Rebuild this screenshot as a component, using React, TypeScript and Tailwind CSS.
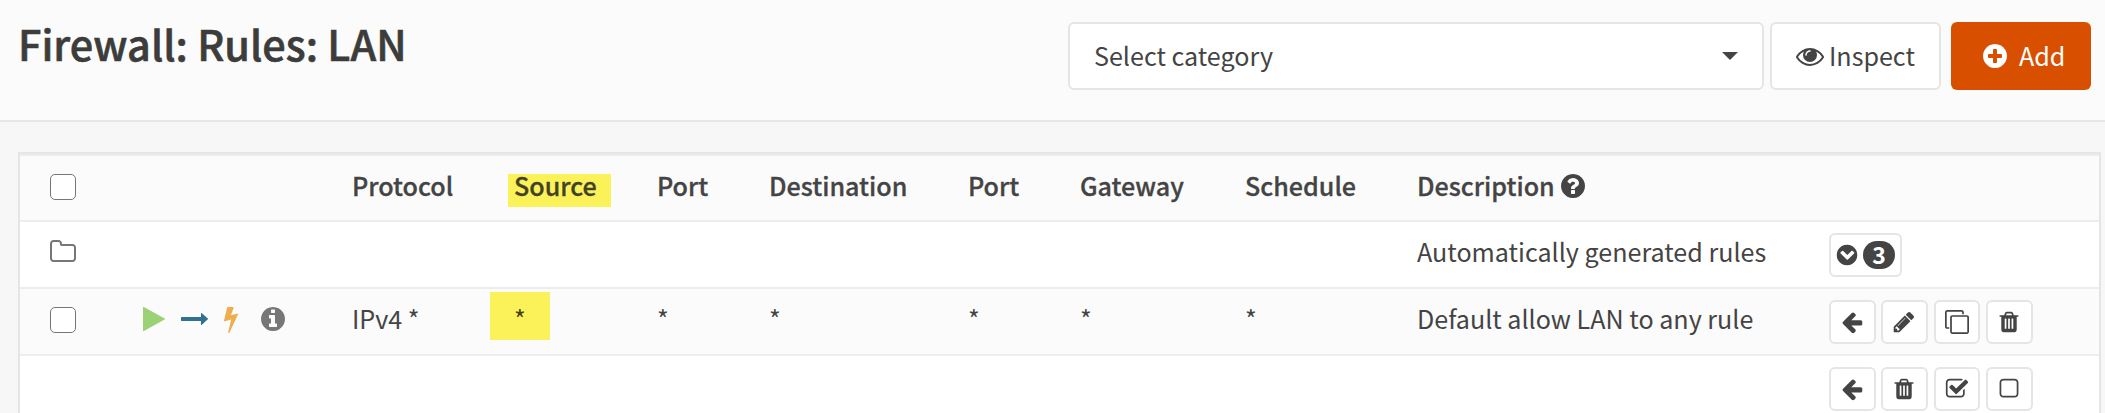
import React from "react";

const ring =
  "q0 209-103 385.5t-279.5 279.5-385.5 103-385.5-103-279.5-279.5-103-385.5 103-385.5 279.5-279.5 385.5-103 385.5 103 279.5 279.5 103 385.5z";

const paths = {
  arrowLeft:
    "M1664 896v128q0 53-32.5 90.5t-84.5 37.5h-704l293 294q38 36 38 90t-38 90l-75 76q-37 37-90 37-52 0-91-37l-651-652q-37-37-37-90 0-52 37-91l651-650q38-38 91-38 52 0 90 38l75 74q38 38 38 91t-38 91l-293 293h704q52 0 84.5 37.5t32.5 90.5z",
  pencil:
    "M491 1536l91-91-235-235-91 91v107h128v128h107zm523-928q0-22-22-22-10 0-17 7l-542 542q-7 7-7 17 0 22 22 22 10 0 17-7l542-542q7-7 7-17zm-54-192l416 416-832 832h-416v-416zm683 96q0 53-37 90l-166 166-416-416 166-165q36-38 90-38 53 0 91 38l235 234q37 39 37 91z",
  trash:
    "M704 1376v-704q0-14-9-23t-23-9h-64q-14 0-23 9t-9 23v704q0 14 9 23t23 9h64q14 0 23-9t9-23zm256 0v-704q0-14-9-23t-23-9h-64q-14 0-23 9t-9 23v704q0 14 9 23t23 9h64q14 0 23-9t9-23zm256 0v-704q0-14-9-23t-23-9h-64q-14 0-23 9t-9 23v704q0 14 9 23t23 9h64q14 0 23-9t9-23zm-544-992h448l-48-117q-7-9-17-11h-317q-10 2-17 11zm928 32v64q0 14-9 23t-23 9h-96v948q0 83-47 143.5t-113 60.5h-832q-66 0-113-58.5t-47-141.5v-952h-96q-14 0-23-9t-9-23v-64q0-14 9-23t23-9h309l70-167q15-37 54-63t79-26h320q40 0 79 26t54 63l70 167h309q14 0 23 9t9 23z",
  clone:
    "M1664 1632v-1088q0-13-9.5-22.5t-22.5-9.5h-1088q-13 0-22.5 9.5t-9.5 22.5v1088q0 13 9.5 22.5t22.5 9.5h1088q13 0 22.5-9.5t9.5-22.5zm128-1088v1088q0 66-47 113t-113 47h-1088q-66 0-113-47t-47-113v-1088q0-66 47-113t113-47h1088q66 0 113 47t47 113zm-384-384v160h-128v-160q0-13-9.5-22.5t-22.5-9.5h-1088q-13 0-22.5 9.5t-9.5 22.5v1088q0 13 9.5 22.5t22.5 9.5h160v128h-160q-66 0-113-47t-47-113v-1088q0-66 47-113t113-47h1088q66 0 113 47t47 113z",
  checkSquare:
    "M1472 930v318q0 119-84.5 203.5t-203.5 84.5h-832q-119 0-203.5-84.5t-84.5-203.5v-832q0-119 84.5-203.5t203.5-84.5h832q63 0 117 25 15 7 18 23 3 17-9 29l-49 49q-10 10-23 10-3 0-9-2-23-6-45-6h-832q-66 0-113 47t-47 113v832q0 66 47 113t113 47h832q66 0 113-47t47-113v-254q0-13 9-22l64-64q10-10 23-10 6 0 12 3 20 8 20 29zm231-489l-814 814q-24 24-57 24t-57-24l-430-430q-24-24-24-57t24-57l110-110q24-24 57-24t57 24l263 263 647-647q24-24 57-24t57 24l110 110q24 24 24 57t-24 57z",
  square:
    "M1312 256h-832q-66 0-113 47t-47 113v832q0 66 47 113t113 47h832q66 0 113-47t47-113v-832q0-66-47-113t-113-47zm288 160v832q0 119-84.5 203.5t-203.5 84.5h-832q-119 0-203.5-84.5t-84.5-203.5v-832q0-119 84.5-203.5t203.5-84.5h832q119 0 203.5 84.5t84.5 203.5z",
  chevronCircle:
    "M967 1239l454-454q19-19 19-45t-19-45l-102-102q-19-19-45-19t-45 19l-307 307-307-307q-19-19-45-19t-45 19l-102 102q-19 19-19 45t19 45l454 454q19 19 45 19t45-19zm697-343" + ring,
  plusCircle:
    "M1344 960v-128q0-26-19-45t-45-19h-256v-256q0-26-19-45t-45-19h-128q-26 0-45 19t-19 45v256h-256q-26 0-45 19t-19 45v128q0 26 19 45t45 19h256v256q0 26 19 45t45 19h128q26 0 45-19t19-45v-256h256q26 0 45-19t19-45zm320-64" + ring,
  questionCircle:
    "M1024 1376v-192q0-14-9-23t-23-9h-192q-14 0-23 9t-9 23v192q0 14 9 23t23 9h192q14 0 23-9t9-23zm256-672q0-88-55.5-163t-138.5-116-170-41q-243 0-371 213-15 24 8 42l132 100q7 6 19 6 16 0 25-12 53-68 86-92 34-24 86-24 48 0 85.5 26t37.5 59q0 38-20 61t-68 45q-63 28-115.5 86.5t-52.5 125.5v36q0 14 9 23t23 9h192q14 0 23-9t9-23q0-19 21.5-49.5t54.5-49.5q32-18 49-28.5t46-35 44.5-48 28-60.5 12.5-81zm384 192" + ring,
  infoCircle:
    "M1152 1376v-160q0-14-9-23t-23-9h-96v-512q0-14-9-23t-23-9h-320q-14 0-23 9t-9 23v160q0 14 9 23t23 9h96v320h-96q-14 0-23 9t-9 23v160q0 14 9 23t23 9h448q14 0 23-9t9-23zm-128-896v-160q0-14-9-23t-23-9h-192q-14 0-23 9t-9 23v160q0 14 9 23t23 9h192q14 0 23-9t9-23zm640 416" + ring,
  eye: "M1664 960q-152-236-381-353 61 104 61 225 0 185-131.5 316.5t-316.5 131.5-316.5-131.5-131.5-316.5q0-121 61-225-229 117-381 353 133 205 333.5 326.5t434.5 121.5 434.5-121.5 333.5-326.5zm-720-384q0-20-14-34t-34-14q-125 0-214.5 89.5t-89.5 214.5q0 20 14 34t34 14 34-14 14-34q0-86 61-147t147-61q20 0 34-14t14-34zm848 384q0 34-20 69-140 230-376.5 368.5t-499.5 138.5-499.5-139-376.5-368q-20-35-20-69t20-69q140-229 376.5-368t499.5-139 499.5 139 376.5 368q20 35 20 69z",
  folder:
    "M1600 1312v-704q0-40-28-68t-68-28h-704q-40 0-68-28t-28-68v-64q0-40-28-68t-68-28h-320q-40 0-68 28t-28 68v960q0 40 28 68t68 28h1216q40 0 68-28t28-68zm128-704v704q0 92-66 158t-158 66h-1216q-92 0-158-66t-66-158v-960q0-92 66-158t158-66h320q92 0 158 66t66 158v32h672q92 0 158 66t66 158z",
  play: "M1576 927l-1328 738q-23 13-39.5 3t-16.5-36v-1472q0-26 16.5-36t39.5 3l1328 738q23 13 23 31t-23 31z",
  bolt: "M1333 566q18 20 7 44l-540 1157q-13 25-42 25-4 0-14-2-17-5-25.5-19t-4.5-30l197-808-406 101q-4 1-12 1-18 0-31-11-18-15-13-39l201-825q4-14 16-23t28-9h328q19 0 32 12.5t13 29.5q0 8-5 18l-171 463 396-98q8-2 12-2 19 0 34 15z",
  longArrow:
    "M1728 893q0 14-10 24l-384 354q-16 14-35 6-19-9-19-29v-224h-1248q-14 0-23-9t-9-23v-192q0-14 9-23t23-9h1248v-224q0-21 19-29t35 5l384 350q10 10 10 23z",
};

type IconName = keyof typeof paths;

function Icon({ name, className = "size-7" }: { name: IconName; className?: string }) {
  return (
    <svg viewBox="0 0 1792 1792" className={`shrink-0 fill-current ${className}`} aria-hidden="true">
      <path d={paths[name]} />
    </svg>
  );
}

function Checkbox() {
  return <span className="block size-[26px] rounded-[5px] border border-[#767676] bg-white" />;
}

function Action({ name, className = "w-[47px]" }: { name: IconName; className?: string }) {
  return (
    <button className={`flex h-11 items-center justify-center rounded-md border-2 border-[#e5e5e5] bg-white pr-px ${className}`}>
      <Icon name={name} className="size-6" />
    </button>
  );
}

const columns =
  "grid grid-cols-[89px_213px_162px_143px_112px_199px_112px_165px_172px_412px_1fr] pl-[30px]";

export default function App() {
  return (
    <div className="h-[413px] w-[2105px] overflow-hidden bg-[#f7f7f7] font-['Noto_Sans_CJK_SC',sans-serif] text-[25.1px] text-[#444]">
      <header className="flex h-[122px] items-start justify-between border-b-2 border-[#e7e7e7] bg-[#fbfbfb] pl-[18px] pr-[14px]">
        <h1 className="pt-[13px] text-[41.4px] font-medium leading-[60px] text-[#3c3c3b] [-webkit-text-stroke:0.6px_#3c3c3b]">Firewall: Rules: LAN</h1>
        <div className="flex pt-[22px]">
          <button className="flex h-[68px] w-[696px] items-center justify-between rounded-md border-2 border-[#e5e5e5] bg-white px-6">
            <span>Select category</span>
            <span className="border-x-8 border-t-8 border-x-transparent border-t-[#444]" />
          </button>
          <button className="ml-[6px] flex h-[68px] w-[171px] items-center gap-[5px] rounded-md border-2 border-[#e5e5e5] bg-white pl-6">
            <Icon name="eye" />
            <span>Inspect</span>
          </button>
          <button className="ml-[10px] flex h-[68px] w-[140px] items-center gap-[10px] rounded-md bg-[#d94f00] pl-[30px] text-white">
            <Icon name="plusCircle" />
            <span>Add</span>
          </button>
        </div>
      </header>
      <main className="pl-[18px] pr-1 pt-[30px]">
        <div className="border-2 border-[#e5e5e5] bg-white">
          <div className={`${columns} h-[68px] border-y-2 border-[#ededed] bg-[#fbfbfb] font-medium leading-[58px] [-webkit-text-stroke:0.3px_#444]`}>
            <div className="pt-[18px]"><Checkbox /></div>
            <div />
            <div>Protocol</div>
            <div className="flex items-start">
              <mark className="-ml-[6px] mt-[18px] h-[33px] w-[103px] bg-[#fbf25a] pl-[6px] leading-[22px] text-[#44421c]">Source</mark>
            </div>
            <div>Port</div>
            <div>Destination</div>
            <div>Port</div>
            <div>Gateway</div>
            <div>Schedule</div>
            <div className="flex gap-1">Description <Icon name="questionCircle" className="mt-[16px] size-7" /></div>
          </div>
          <div className={`${columns} h-[67px] border-b-2 border-[#ededed] leading-[58px]`}>
            <div className="-ml-px pt-[16px] text-[#777]"><Icon name="folder" /></div>
            <div className="col-span-8" />
            <div>Automatically generated rules</div>
            <div className="pt-[11px]">
              <button className="flex h-11 w-[73px] items-center gap-1 rounded-md border-2 border-[#e5e5e5] bg-white pl-1">
                <Icon name="chevronCircle" className="size-6" />
                <span className="flex h-7 w-8 items-center justify-center rounded-[14px] bg-[#444] pb-0.5 text-[23px] font-bold leading-none text-white">3</span>
              </button>
            </div>
          </div>
          <div className={`${columns} h-[67px] border-b-2 border-[#ededed] bg-[#fbfbfb] leading-[58px]`}>
            <div className="pt-[18px]"><Checkbox /></div>
            <div className="flex items-start pl-px pt-[16px]">
              <Icon name="play" className="size-7 text-[#9bd275]" />
              <Icon name="longArrow" className="ml-[13px] size-7 text-[#31708f]" />
              <Icon name="bolt" className="ml-[8px] size-7 text-[#f0ad4e]" />
              <Icon name="infoCircle" className="ml-[14px] size-7 text-[#777]" />
            </div>
            <div>IPv4 *</div>
            <div className="flex items-start">
              <mark className="-ml-[24px] mt-[3px] h-12 w-[60px] bg-[#fbf25a] pl-[24px] leading-[52px] text-[#44421c]">*</mark>
            </div>
            <div>*</div>
            <div>*</div>
            <div>*</div>
            <div>*</div>
            <div>*</div>
            <div>Default allow LAN to any rule</div>
            <div className="flex pt-[11px]">
              <Action name="arrowLeft" />
              <Action name="pencil" className="ml-[5px] w-[47px]" />
              <Action name="clone" className="ml-[6px] w-[46px]" />
              <Action name="trash" className="ml-[6px] w-[47px]" />
            </div>
          </div>
          <div className={`${columns} h-[67px]`}>
            <div className="col-span-10" />
            <div className="flex pt-[11px]">
              <Action name="arrowLeft" />
              <Action name="trash" className="ml-[5px] w-[47px]" />
              <Action name="checkSquare" className="ml-[6px] w-[46px]" />
              <Action name="square" className="ml-[6px] w-[47px]" />
            </div>
          </div>
        </div>
      </main>
    </div>
  );
}
